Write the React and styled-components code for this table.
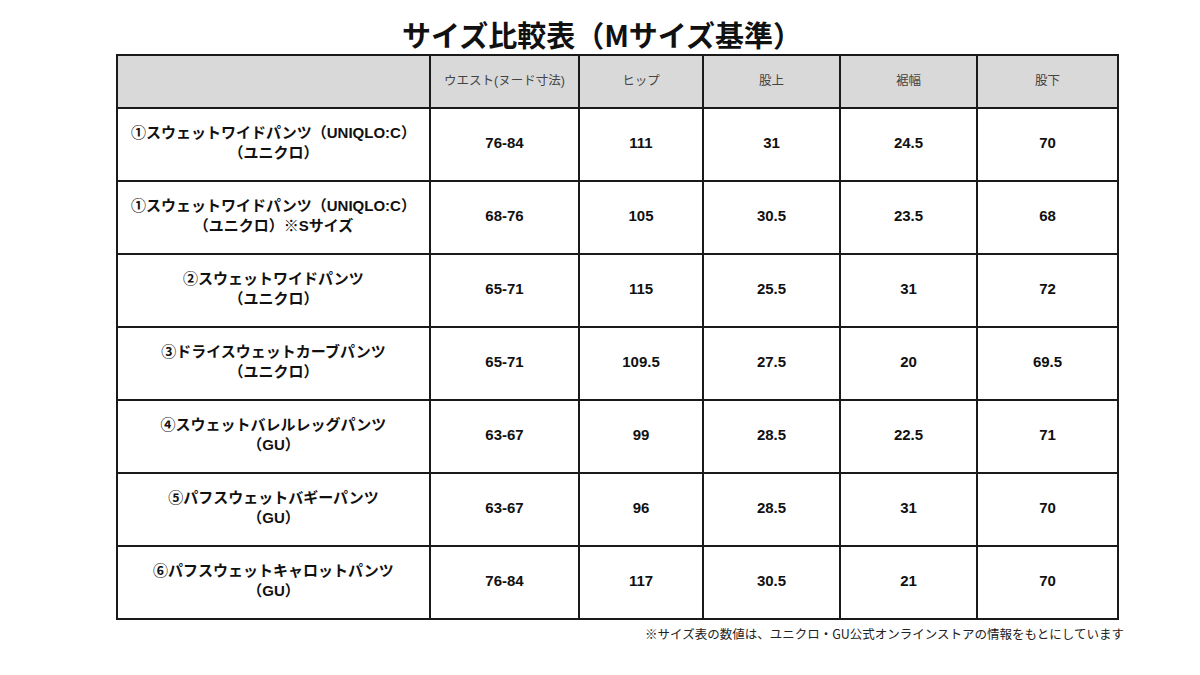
import React from "react";
import styled, { createGlobalStyle } from "styled-components";

const Global = createGlobalStyle`
  html, body { margin: 0; padding: 0; background: #ffffff; }
  body { font-family: "Liberation Sans", "Noto Sans CJK JP", sans-serif; color: #111; }
`;

const Page = styled.div`
  width: 1200px;
  height: 675px;
  display: flex;
  flex-direction: column;
  align-items: center;
  padding-top: 17px;
  box-sizing: border-box;
`;

const Title = styled.h1`
  margin: 0 0 3px 4px;
  font-family: "Noto Sans CJK JP", sans-serif;
  font-size: 29px;
  line-height: 34px;
  font-weight: 700;
  color: #111;
  letter-spacing: 0;
`;

const Table = styled.table`
  align-self: flex-start;
  margin-left: 116px;
  border-collapse: collapse;
  table-layout: fixed;
  width: 1001px;
`;

const HeadCell = styled.th`
  background: #d9d9d9;
  border: 2px solid #1a1a1a;
  height: 47px;
  padding: 0 0 4px 0;
  font-family: "Liberation Sans", "Noto Sans CJK JP", sans-serif;
  font-weight: 400;
  font-size: 12.5px;
  color: #444;
  text-align: center;
  vertical-align: middle;
`;

const Cell = styled.td`
  border: 2px solid #1a1a1a;
  height: 67px;
  padding: 0 0 4px 0;
  text-align: center;
  vertical-align: middle;
  font-family: "Liberation Sans", "Noto Sans CJK JP", sans-serif;
  font-weight: 700;
  font-size: 15px;
  line-height: 20px;
  color: #111;
`;

const Note = styled.p`
  align-self: stretch;
  margin: 5px 0 0 0;
  padding-right: 76px;
  text-align: right;
  font-family: "Noto Sans CJK JP", sans-serif;
  font-size: 12.5px;
  line-height: 18px;
  color: #222;
`;

const widths = [313, 149, 124, 137, 137, 141];
const headers = ["", "ウエスト(ヌード寸法)", "ヒップ", "股上", "裾幅", "股下"];

const rows = [
  [["①スウェットワイドパンツ（UNIQLO:C）", "（ユニクロ）"], "76-84", "111", "31", "24.5", "70"],
  [["①スウェットワイドパンツ（UNIQLO:C）", "（ユニクロ）※Sサイズ"], "68-76", "105", "30.5", "23.5", "68"],
  [["②スウェットワイドパンツ", "（ユニクロ）"], "65-71", "115", "25.5", "31", "72"],
  [["③ドライスウェットカーブパンツ", "（ユニクロ）"], "65-71", "109.5", "27.5", "20", "69.5"],
  [["④スウェットバレルレッグパンツ", "（GU）"], "63-67", "99", "28.5", "22.5", "71"],
  [["⑤パフスウェットバギーパンツ", "（GU）"], "63-67", "96", "28.5", "31", "70"],
  [["⑥パフスウェットキャロットパンツ", "（GU）"], "76-84", "117", "30.5", "21", "70"],
];

export default function App() {
  return (
    <>
      <Global />
      <Page>
        <Title>サイズ比較表（Mサイズ基準）</Title>
        <Table>
          <colgroup>
            {widths.map((w, i) => (
              <col key={i} style={{ width: w }} />
            ))}
          </colgroup>
          <thead>
            <tr>
              {headers.map((h, i) => (
                <HeadCell key={i}>{h}</HeadCell>
              ))}
            </tr>
          </thead>
          <tbody>
            {rows.map((r, i) => (
              <tr key={i}>
                <Cell>
                  {r[0][0]}
                  <br />
                  {r[0][1]}
                </Cell>
                {r.slice(1).map((v, j) => (
                  <Cell key={j}>{v}</Cell>
                ))}
              </tr>
            ))}
          </tbody>
        </Table>
        <Note>※サイズ表の数値は、ユニクロ・GU公式オンラインストアの情報をもとにしています</Note>
      </Page>
    </>
  );
}
